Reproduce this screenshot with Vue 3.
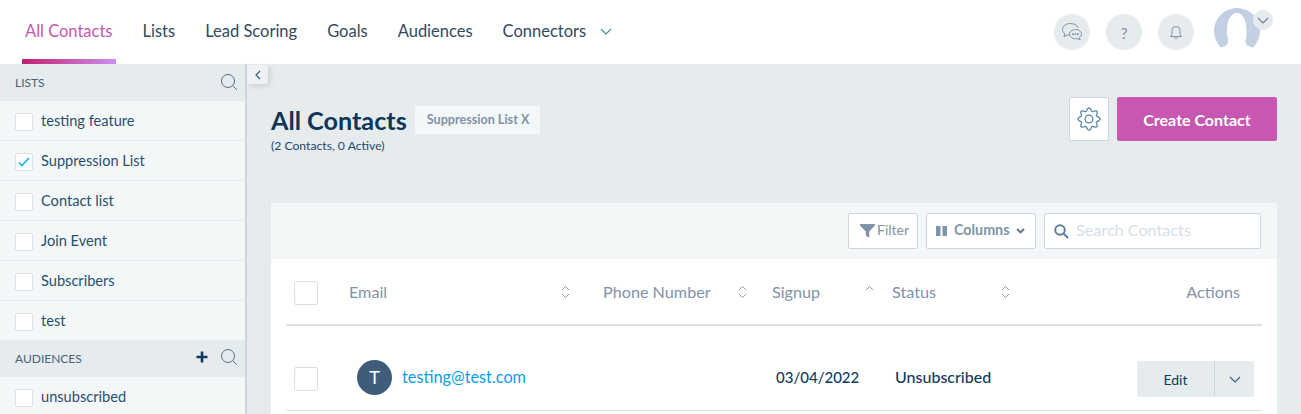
<script setup>
const navItems = ['All Contacts', 'Lists', 'Lead Scoring', 'Goals', 'Audiences', 'Connectors'];
const lists = [
  { name: 'testing feature', checked: false },
  { name: 'Suppression List', checked: true },
  { name: 'Contact list', checked: false },
  { name: 'Join Event', checked: false },
  { name: 'Subscribers', checked: false },
  { name: 'test', checked: false }
];
const columns = [
  { label: 'Email', cls: 'col-email', sort: 'both' },
  { label: 'Phone Number', cls: 'col-phone', sort: 'both' },
  { label: 'Signup', cls: 'col-signup', sort: 'up' },
  { label: 'Status', cls: 'col-status', sort: 'both' }
];

// eight rounded lobes round the settings wheel
const gearPath = Array.from({ length: 97 }, (_, i) => {
  const a = (i / 96) * Math.PI * 2;
  const r = 9.6 + 1.5 * Math.cos(8 * a);
  return `${i ? 'L' : 'M'}${(12 + r * Math.sin(a)).toFixed(2)} ${(12 - r * Math.cos(a)).toFixed(2)}`;
}).join('') + 'z';
</script>

<template>
  <div class="page">
    <header class="topbar">
      <nav class="nav">
        <a v-for="(item, i) in navItems" :key="item" class="nav-item" :class="{ active: i === 0 }">{{ item }}</a>
        <svg class="nav-caret" width="12" height="7" viewBox="0 0 12 7" fill="none" stroke="#3f8d9c" stroke-width="1.1"><path d="M1 1l5 5 5-5" /></svg>
      </nav>
      <div class="top-icons">
        <span class="round-btn">
          <svg width="24" height="22" viewBox="0 0 24 22" fill="none" stroke="#7d92ab" stroke-width="1">
            <path d="M9.500 14.300c-.7 0-1.400-.1-2.100-.3L4 15.500l.8-2.800C3.400 11.700 2.500 10.200 2.500 8.500c0-3.400 3.600-6 8-6 3.600 0 6.600 1.700 7.700 4.300" />
            <path d="M15.500 8.500c-3.300 0-6 2-6 4.600s2.700 4.600 6 4.600c.6 0 1.100-.1 1.600-.2l3 1.300-.7-2.400c1.300-.8 2.100-2 2.100-3.300 0-2.600-2.700-4.600-6-4.600z" />
            <circle cx="13" cy="13.200" r=".6" fill="#7d92ab" /><circle cx="15.500" cy="13.200" r=".6" fill="#7d92ab" /><circle cx="18" cy="13.200" r=".6" fill="#7d92ab" />
          </svg>
        </span>
        <span class="round-btn question">?</span>
        <span class="round-btn">
          <svg width="14" height="16" viewBox="0 0 14 16" fill="none" stroke="#7d92ab" stroke-width="1">
            <path d="M1.500 12.500c1-.8 1.500-2 1.500-3.500V6.500a4 4 0 0 1 8 0V9c0 1.500.5 2.700 1.500 3.500z" />
            <path d="M5.500 13c0 1 .6 1.800 1.500 1.800s1.500-.8 1.500-1.800" />
          </svg>
        </span>
        <span class="avatar-wrap">
          <svg width="46" height="41" viewBox="0 0 46 41">
            <circle cx="23" cy="23" r="23" fill="#c3cfe2" />
            <path d="M0 41h46v-1.500l-5 .5c-3-.5-6-1.500-8-3-1.500-1.500-1.500-3-1.500-5 1-3 1.500-7 1-11C32 11 28.500 5 23 5S13.500 11 13 20.500c-.5 4 0 8 1 11 0 2.500 0 4-1.500 5.500-2 1.500-5 2.500-7.500 3l-5-.5z" fill="#fff" />
          </svg>
          <span class="avatar-caret">
            <svg width="12" height="7" viewBox="0 0 12 7" fill="none" stroke="#6f8198" stroke-width="1.100"><path d="M1 1l5 5 5-5" /></svg>
          </span>
        </span>
      </div>
    </header>

    <div class="body">
      <aside class="sidebar">
        <div class="side-head lists-head">
          <span>LISTS</span>
          <svg class="side-search" width="18" height="18" viewBox="0 0 18 18" fill="none" stroke="#4d6f8c" stroke-width="1"><circle cx="8" cy="8" r="6.500" /><path d="M12.800 12.800l4 4" /></svg>
        </div>
        <div v-for="list in lists" :key="list.name" class="side-row">
          <span class="check small">
            <svg v-if="list.checked" width="12" height="10" viewBox="0 0 12 10" fill="none" stroke="#14b1ec" stroke-width="1.600"><path d="M1 5.500l3 3 7-7.500" /></svg>
          </span>
          <span>{{ list.name }}</span>
        </div>
        <div class="side-head aud-head">
          <span>AUDIENCES</span>
          <span class="side-tools">
            <svg width="12" height="12" viewBox="0 0 12 12" fill="#123a5e"><path d="M4.700 0.500h2.600v4.200h4.200v2.600H7.300v4.200H4.700V7.300H.5V4.700h4.200z" /></svg>
            <svg width="18" height="18" viewBox="0 0 18 18" fill="none" stroke="#4d6f8c" stroke-width="1"><circle cx="8" cy="8" r="6.500" /><path d="M12.800 12.800l4 4" /></svg>
          </span>
        </div>
        <div class="side-row no-line">
          <span class="check small"></span>
          <span>unsubscribed</span>
        </div>
      </aside>

      <main class="main">
        <span class="collapse-tab">
          <svg width="6" height="10" viewBox="0 0 6 10" fill="none" stroke="#2f5878" stroke-width="1.100"><path d="M5 1L1 5l4 4" /></svg>
        </span>

        <section class="title-row">
          <div class="title-block">
            <div class="title-line">
              <h1>All Contacts</h1>
              <span class="tag">Suppression List X</span>
            </div>
            <p class="counts">(2 Contacts, 0 Active)</p>
          </div>
          <div class="title-actions">
            <button class="gear-btn" type="button">
              <svg width="24" height="24" viewBox="0 0 24 24" fill="none" stroke="#5a86a6" stroke-width="1.300">
                <circle cx="12" cy="12" r="3.800" />
                <path :d="gearPath" />
              </svg>
            </button>
            <button class="create-btn" type="button">Create Contact</button>
          </div>
        </section>

        <section class="card">
          <div class="toolbar">
            <button class="tool-btn filter" type="button">
              <svg width="15" height="14" viewBox="0 0 15 14" fill="#7f93a9"><path d="M0 0h15v1.600L9.200 7.500V14L5.800 11.500v-4L0 1.600z" /></svg>
              <span>Filter</span>
            </button>
            <button class="tool-btn columns" type="button">
              <svg width="11" height="10" viewBox="0 0 11 10" fill="#7f93a9"><path d="M0 0h4.500v10H0zM6.500 0H11v10H6.500z" /></svg>
              <span>Columns</span>
              <svg width="9" height="6" viewBox="0 0 9 6" fill="none" stroke="#60748c" stroke-width="1.800"><path d="M1 1l3.500 3.500L8 1" /></svg>
            </button>
            <label class="search">
              <svg width="15" height="15" viewBox="0 0 15 15" fill="none" stroke="#5f7f9c" stroke-width="2"><circle cx="6" cy="6" r="4.800" /><path d="M9.500 9.500l4.500 4.500" /></svg>
              <span>Search Contacts</span>
            </label>
          </div>

          <div class="table">
            <div class="grid head-row">
              <span class="check large"></span>
              <div v-for="col in columns" :key="col.label" class="th" :class="col.cls">
                <span>{{ col.label }}</span>
                <svg width="9" height="14" viewBox="0 0 9 14" fill="none" stroke="#93a3b5" stroke-width="1">
                  <path d="M1 5l3.500-3.500L8 5" />
                  <path v-if="col.sort === 'both'" d="M1 9l3.500 3.500L8 9" />
                </svg>
              </div>
              <div class="th-actions">Actions</div>
            </div>

            <div class="grid body-row">
              <span class="check large"></span>
              <div class="email-cell">
                <span class="initial">T</span>
                <a class="email">testing@test.com</a>
              </div>
              <div></div>
              <div class="date">03/04/2022</div>
              <div class="status">Unsubscribed</div>
              <div class="actions">
                <div class="edit-group">
                  <span class="edit">Edit</span>
                  <span class="edit-caret">
                    <svg width="12" height="7" viewBox="0 0 12 7" fill="none" stroke="#3a5a78" stroke-width="1.100"><path d="M1 1l5 5 5-5" /></svg>
                  </span>
                </div>
              </div>
            </div>
          </div>
        </section>
      </main>
    </div>
  </div>
</template>

<style>
html,
body {
  margin: 0;
  overflow: hidden;
}
</style>

<style scoped>
.page {
  height: 414px;
  overflow: hidden;
  display: flex;
  flex-direction: column;
  font-family: Lato, "Noto Sans", sans-serif;
  color: #123a5e;
  background: #e6ebee;
}

.topbar {
  height: 64px;
  box-sizing: border-box;
  flex-shrink: 0;
  background: #fff;
  display: flex;
  justify-content: space-between;
  padding: 0 41px 0 22px;
}

.nav {
  display: flex;
  align-items: stretch;
  gap: 24px;
}

.nav-item {
  display: flex;
  align-items: center;
  padding: 0 3px 2px;
  height: 64px;
  box-sizing: border-box;
  font-size: 16.500px;
  color: #34495e;
  position: relative;
}

.nav-item.active {
  color: #c757b0;
}

.nav-item.active::after {
  content: '';
  position: absolute;
  left: 0;
  right: 0;
  bottom: 0;
  height: 5px;
  background: linear-gradient(90deg, #c2206f, #cc90f2);
}

.nav-caret {
  align-self: center;
  margin: -2px 0 0 -13px;
}

.top-icons {
  display: flex;
  align-items: flex-start;
  gap: 16px;
  padding-top: 14px;
}

.round-btn {
  width: 36px;
  height: 36px;
  border-radius: 50%;
  background: #e6ebee;
  display: flex;
  align-items: center;
  justify-content: center;
}

.question {
  font-size: 16px;
  color: #7d92ab;
}

.avatar-wrap {
  position: relative;
  width: 46px;
  height: 41px;
  margin: -6px 0 0 4px;
}

.avatar-caret {
  position: absolute;
  top: 2px;
  left: 39px;
  width: 20px;
  height: 20px;
  border-radius: 50%;
  background: #e6ebee;
  display: flex;
  align-items: center;
  justify-content: center;
}

.body {
  flex: 1;
  display: flex;
  min-height: 0;
}

.sidebar {
  width: 245px;
  flex-shrink: 0;
  border-right: 2px solid #cdd6e0;
  background: #f4f7f8;
  font-size: 14.600px;
  color: #2a4f6e;
}

.side-head {
  display: flex;
  align-items: center;
  justify-content: space-between;
  padding: 0 7px 0 15px;
  background: #e6ebee;
  font-size: 12px;
  color: #4a6075;
}

.lists-head {
  height: 37px;
}

.aud-head {
  height: 37px;
}

.side-search {
  margin-top: -2px;
}

.side-tools {
  display: flex;
  align-items: center;
  gap: 12px;
  margin-top: -3px;
}

.side-row {
  height: 40px;
  box-sizing: border-box;
  display: flex;
  align-items: center;
  gap: 8px;
  padding-left: 15px;
  border-bottom: 1px solid #e6ebee;
}

.side-row:nth-last-child(3) {
  height: 39px;
  border-bottom: 0;
}

.side-row.no-line {
  border-bottom: 0;
}

.no-line span:last-child {
  margin-top: -2px;
}

.check {
  display: inline-flex;
  align-items: center;
  justify-content: center;
  box-sizing: border-box;
  background: #fff;
  border: 1px solid #d8dfe7;
  border-radius: 2px;
  flex-shrink: 0;
}

.check.small {
  width: 18px;
  height: 18px;
  margin-top: 2px;
}

.check.large {
  width: 24px;
  height: 24px;
  margin-left: 8px;
  margin-top: 2px;
}

.body-row .check.large {
  margin-top: 4px;
}

.main {
  flex: 1;
  position: relative;
  padding: 33px 24px 0 24px;
  min-width: 0;
}

.collapse-tab {
  position: absolute;
  top: 1px;
  left: 0;
  width: 21px;
  height: 19px;
  background: #eef2f5;
  border-radius: 0 0 4px 0;
  box-shadow: 2px 2px 5px rgba(40, 70, 100, 0.15);
  display: flex;
  align-items: center;
  justify-content: center;
}

.title-row {
  display: flex;
  justify-content: space-between;
  align-items: flex-start;
  height: 106px;
}

.title-line {
  display: flex;
  align-items: center;
  gap: 8px;
  margin-top: 9px;
}

h1 {
  margin: 0;
  font-size: 25.200px;
  font-weight: 700;
  line-height: 28px;
  color: #0f3557;
}

.tag {
  background: #f4f7f8;
  height: 28px;
  line-height: 28px;
  padding: 0 11px 0 12px;
  font-size: 12.600px;
  font-weight: 700;
  color: #7f93a9;
}

.counts {
  margin: 5px 0 0;
  font-size: 12.200px;
  line-height: 14px;
  color: #1f4a6d;
}

.title-actions {
  display: flex;
  gap: 8px;
}

.gear-btn {
  width: 40px;
  height: 44px;
  padding: 0;
  background: #fff;
  border: 1px solid #cdd6e0;
  border-radius: 2px;
  display: flex;
  align-items: center;
  justify-content: center;
}

.create-btn {
  width: 160px;
  height: 44px;
  border: 0;
  border-radius: 2px;
  background: #c757b0;
  color: #fff;
  font-family: inherit;
  font-size: 16px;
  font-weight: 700;
}

.card {
  background: #fff;
  border-radius: 2px;
  padding-bottom: 20px;
}

.toolbar {
  height: 56px;
  box-sizing: border-box;
  background: #f4f7f8;
  display: flex;
  justify-content: flex-end;
  align-items: center;
  gap: 8px;
  padding: 0 16px;
}

.tool-btn,
.search {
  height: 36px;
  box-sizing: border-box;
  background: #fff;
  border: 1px solid #cdd6e0;
  border-radius: 2px;
  display: flex;
  align-items: center;
  font-family: inherit;
  font-size: 14px;
  color: #7f93a9;
  padding: 0;
}

.tool-btn span,
.search span {
  margin-top: -3px;
}

.filter {
  width: 70px;
  gap: 2px;
  padding-left: 11px;
}

.columns {
  width: 110px;
  gap: 7px;
  padding-left: 9px;
  font-size: 14.300px;
  font-weight: 700;
}

.search {
  width: 217px;
  gap: 7px;
  padding-left: 9px;
  font-size: 16.200px;
  color: #d5dee7;
}

.table {
  padding: 0 15px;
}

.grid {
  display: grid;
  grid-template-columns: 63px 254px 169px 120px 120px 1fr;
  align-items: center;
}

.head-row {
  height: 67px;
  box-sizing: border-box;
  border-bottom: 2px solid #dddfe1;
  font-size: 16.200px;
  color: #7f93a9;
}

.th {
  display: flex;
  justify-content: space-between;
  align-items: center;
}

.col-email { padding-right: 33px; }
.col-phone { padding-right: 25px; }
.col-signup { padding-right: 18px; }
.col-status { padding-right: 2px; }

.th-actions {
  text-align: right;
  padding-right: 22px;
}

.body-row {
  height: 85px;
  box-sizing: border-box;
  padding-top: 18px;
  border-bottom: 1px solid #dddfe1;
}

.email-cell {
  display: flex;
  align-items: center;
  gap: 10px;
  margin-left: 8px;
}

.initial {
  width: 35px;
  height: 35px;
  border-radius: 50%;
  background: #3f5d7b;
  color: #fff;
  font-size: 18px;
  display: flex;
  align-items: center;
  justify-content: center;
}

.email {
  font-size: 16.300px;
  color: #0d9de8;
  margin-top: -1px;
}

.date,
.status {
  font-weight: 500;
  color: #123a5e;
  margin-top: -1px;
}

.date {
  font-size: 15px;
  padding-left: 4px;
}

.status {
  font-size: 16px;
  padding-left: 3px;
}

.actions {
  display: flex;
  justify-content: flex-end;
  padding-right: 8px;
  margin-top: 4px;
}

.edit-group {
  display: flex;
  width: 117px;
  height: 36px;
  background: #e6ebee;
  border-radius: 2px;
  font-size: 14px;
  color: #123a5e;
}

.edit {
  width: 77px;
  display: flex;
  align-items: center;
  justify-content: center;
  border-right: 1px solid #cdd6e0;
}

.edit-caret {
  flex: 1;
  display: flex;
  align-items: center;
  justify-content: center;
}
</style>
